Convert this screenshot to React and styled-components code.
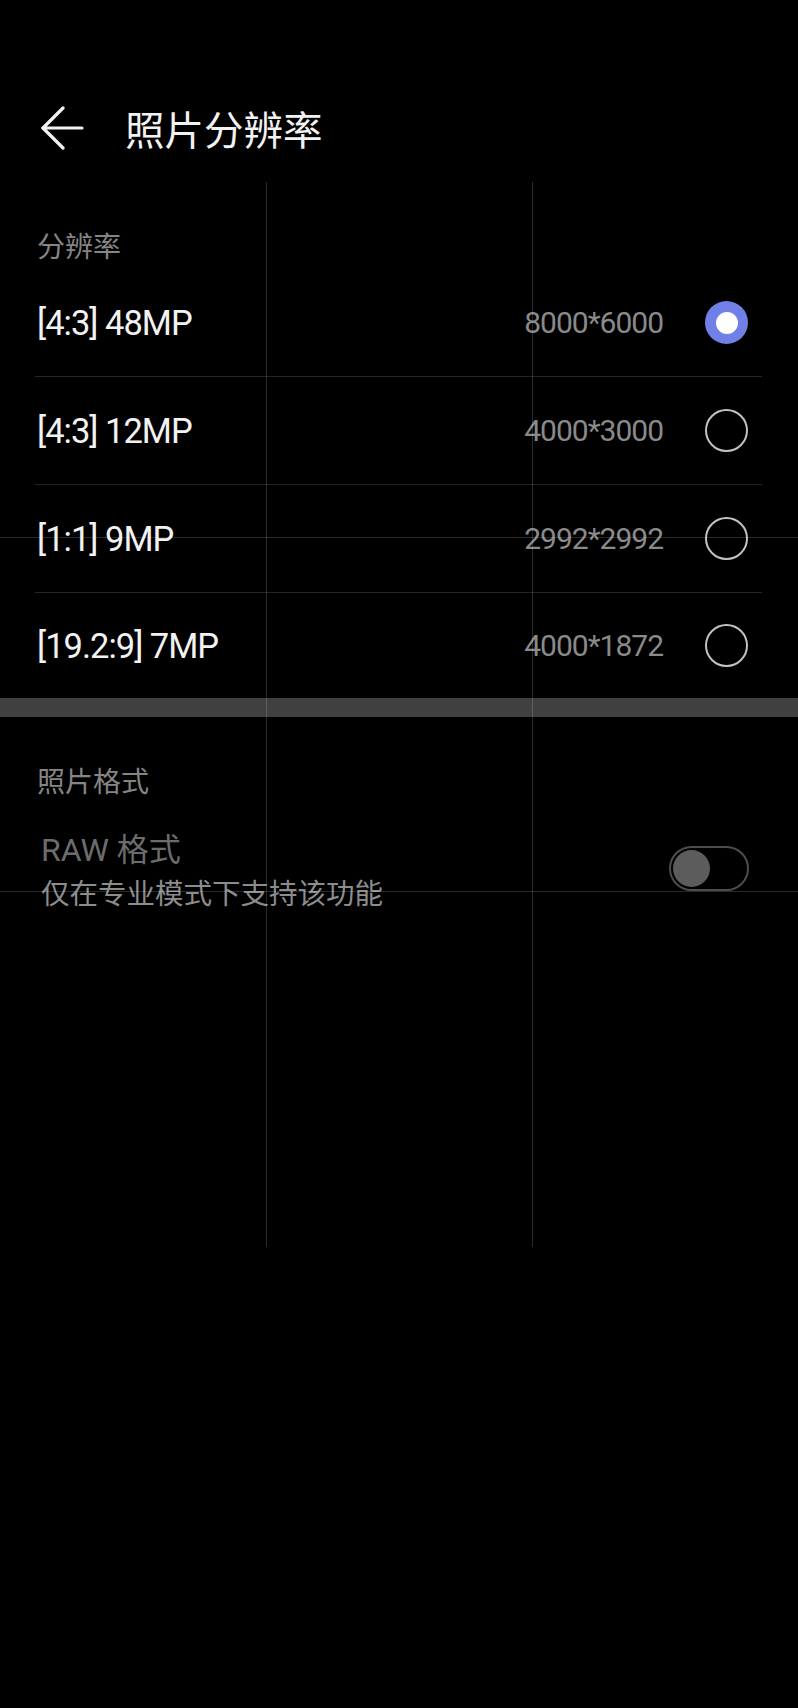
import React from 'react';
import styled, { createGlobalStyle } from 'styled-components';

const GlobalStyle = createGlobalStyle`
  html, body {
    margin: 0;
    padding: 0;
    background: #000;
  }
  * {
    box-sizing: border-box;
  }
`;

const Page = styled.div`
  position: relative;
  width: 798px;
  min-height: 1708px;
  background: #000;
  font-family: Roboto, 'Noto Sans CJK SC', sans-serif;
  overflow: hidden;
`;

// camera preview grid, drawn over the settings panel
const GridV = styled.div`
  position: absolute;
  top: 182px;
  left: ${p => p.x}px;
  width: 1px;
  height: 1065px;
  background: rgba(255, 255, 255, 0.16);
  pointer-events: none;
`;

const GridH = styled.div`
  position: absolute;
  left: 0;
  right: 0;
  top: ${p => p.y}px;
  height: 1px;
  background: rgba(255, 255, 255, 0.16);
  pointer-events: none;
`;

const Header = styled.header`
  display: flex;
  align-items: center;
  height: 80px;
  margin-top: 88px;
  padding-left: 40px;
  gap: 41px;
`;

const BackButton = styled.button`
  display: flex;
  align-items: center;
  justify-content: center;
  width: 44px;
  height: 44px;
  padding: 0;
  border: none;
  background: none;
`;

const Title = styled.h1`
  margin: 0;
  font-family: 'Noto Sans CJK SC', sans-serif;
  font-size: 39.5px;
  font-weight: 400;
  color: #f2f2f2;
  line-height: 44px;
`;

const SectionTitle = styled.div`
  padding: ${p => p.top}px 37px ${p => p.bottom}px;
  font-family: 'Noto Sans CJK SC', sans-serif;
  font-size: 28px;
  line-height: 28px;
  color: #858585;
`;

const List = styled.div`
  margin: 0 36px 0 35px;
`;

const Row = styled.div`
  display: flex;
  align-items: center;
  height: ${p => (p.last ? 105 : 108)}px;
  padding: 0 14px 0 2px;
  border-bottom: ${p => (p.last ? 'none' : '1px solid #262626')};
`;

const Label = styled.span`
  flex: 1;
  font-size: 34.5px;
  letter-spacing: -1px;
  color: #f2f2f2;
`;

const Size = styled.span`
  font-size: 30px;
  letter-spacing: -1px;
  color: #8a8a8a;
  margin-right: 42px;
`;

const Radio = styled.span`
  display: flex;
  align-items: center;
  justify-content: center;
  width: 43px;
  height: 43px;
  border-radius: 50%;
  background: ${p => (p.checked ? '#7080e6' : 'transparent')};
  border: ${p => (p.checked ? 'none' : '2.5px solid #c2c2c2')};

  &::after {
    content: '';
    display: ${p => (p.checked ? 'block' : 'none')};
    width: 22px;
    height: 22px;
    border-radius: 50%;
    background: #fff;
  }
`;

const ThickDivider = styled.div`
  height: 19px;
  background: #404040;
`;

const SwitchRow = styled.div`
  display: flex;
  align-items: center;
  margin: 0 49px 0 41px;
`;

const SwitchText = styled.div`
  flex: 1;
  display: flex;
  flex-direction: column;
`;

const SwitchTitle = styled.span`
  font-size: 32px;
  line-height: 40px;
  color: #6c6c6c;
`;

const SwitchSub = styled.span`
  font-family: 'Noto Sans CJK SC', sans-serif;
  font-size: 28.5px;
  line-height: 44px;
  color: #8c8c8c;
`;

const Track = styled.span`
  display: flex;
  align-items: center;
  width: 80px;
  height: 45px;
  padding: 0 2px;
  margin-top: -8px;
  border: 2px solid #4d4d4d;
  border-radius: 23px;
`;

const Knob = styled.span`
  width: 37px;
  height: 37px;
  border-radius: 50%;
  background: #5c5c5c;
`;

const resolutions = [
  { label: '[4:3] 48MP', size: '8000*6000', checked: true },
  { label: '[4:3] 12MP', size: '4000*3000' },
  { label: '[1:1] 9MP', size: '2992*2992' },
  { label: '[19.2:9] 7MP', size: '4000*1872' },
];

const App = () => (
  <Page>
    <GlobalStyle />
    <Header>
      <BackButton aria-label="back">
        <svg width="44" height="44" viewBox="0 0 44 44" fill="none" stroke="#f2f2f2" strokeWidth="3.2" strokeLinecap="round" strokeLinejoin="round">
          <path d="M3 22H42" />
          <path d="M23 2L3 22L23 42" />
        </svg>
      </BackButton>
      <Title>照片分辨率</Title>
    </Header>

    <SectionTitle top={63} bottom={10}>分辨率</SectionTitle>
    <List>
      {resolutions.map((r, i) => (
        <Row key={r.label} last={i === resolutions.length - 1}>
          <Label>{r.label}</Label>
          <Size>{r.size}</Size>
          <Radio checked={r.checked} />
        </Row>
      ))}
    </List>
    <ThickDivider />

    <SectionTitle top={49} bottom={36}>照片格式</SectionTitle>
    <SwitchRow>
      <SwitchText>
        <SwitchTitle>RAW 格式</SwitchTitle>
        <SwitchSub>仅在专业模式下支持该功能</SwitchSub>
      </SwitchText>
      <Track>
        <Knob />
      </Track>
    </SwitchRow>

    <GridV x={266} />
    <GridV x={532} />
    <GridH y={537} />
    <GridH y={891} />
  </Page>
);

export default App;
